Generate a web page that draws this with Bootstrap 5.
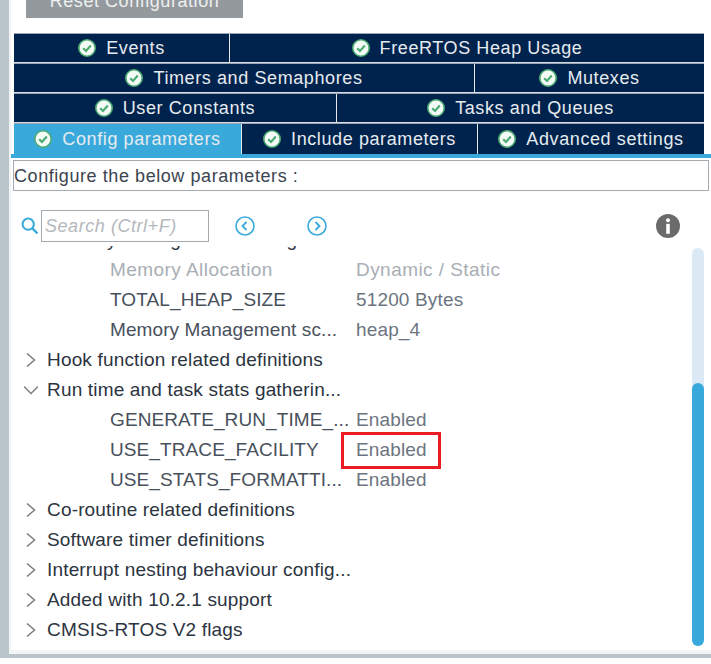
<!DOCTYPE html>
<html lang="en">
<head>
  <meta charset="UTF-8" />
  <title>FreeRTOS Config parameters</title>
  <link href="https://cdn.jsdelivr.net/npm/bootstrap@5.3.0/dist/css/bootstrap.min.css" rel="stylesheet">
  <style>
    body {
      background: #fff;
      font-family: "Liberation Sans", Arial, sans-serif;
      overflow: hidden;
    }
    .cfg-panel {
      height: 658px;
      border-left: 9px solid #b9c5cb;
      border-bottom: 4px solid #b9c5cb;
      background: #f1f3f4;
      padding: 0 0 4px 2px;
    }
    .cfg-inner { background: #fff; height: 100%; }
    .reset-btn {
      display: block;
      margin: -16px 0 15px 15px;
      width: 217px;
      height: 34px;
      background: #94999e;
      border: 0;
      color: #eef0f1;
      font-size: 18px;
      letter-spacing: .55px;
      line-height: 18px;
      padding: 0;
    }
    .tab-wrap { margin-left: 3px; width: 690px; }
    .tab-row { height: 30px; border-top: 1px solid #9aa6b4; border-bottom: 1px solid #d5dbe0; }
    .tab-row:last-child { height: 31px; border-bottom: 0; }
    .tab-item {
      background: #00234d;
      color: #e6ebef;
      font-size: 18px;
      letter-spacing: .6px;
      gap: 10px;
      white-space: nowrap;
      border-left: 1px solid #e5e9ec;
      min-width: 0;
    }
    .tab-item:first-child { border-left: 0; }
    .tab-item.is-active { background: #39a9dc; }
    .w-215 { width: 215px; } .w-475 { width: 475px; }
    .w-460 { width: 460px; } .w-230 { width: 230px; }
    .w-322 { width: 322px; } .w-368 { width: 368px; }
    .w-227 { width: 227px; } .w-236 { width: 236px; }
    .blue-bar { height: 4px; background: #39a9dc; }
    .intro-box {
      margin: 2px 2px 0 2px;
      height: 31px;
      border: 1px solid #a3aab0;
      font-size: 18px;
      line-height: 31px;
      letter-spacing: .57px;
      color: #3c4450;
    }
    .search-row { height: 55px; padding: 19px 0 0 10px; }
    .search-ico { width: 18px; height: 18px; margin-top: 7px; }
    .search-box {
      width: 168px;
      height: 32px;
      border: 1px solid #a3aab0;
      font-size: 18px;
      font-style: italic;
      color: #b4b8bc;
      line-height: 30px;
      padding-left: 3px;
      margin-left: 2px;
      letter-spacing: .55px;
    }
    .arrow-ico { width: 20px; height: 20px; margin-top: 6px; flex: none; }
    .arrow-prev { margin-left: 26px; }
    .arrow-next { margin-left: 52px; }
    .info-ico { width: 24px; height: 24px; margin: 4px 31px 0 auto; flex: none; }
    .tree-area { height: 404px; overflow: hidden; }
    .tree-list { margin-top: -21px; width: 680px; }
    .tree-row { height: 30px; line-height: 30px; font-size: 19px; letter-spacing: .17px; color: #2c3440; white-space: nowrap; }
    .tree-row svg { width: 14px; height: 14px; margin: 0 9px 0 13px; flex: none; }
    .tree-leaf { padding-left: 99px; color: #48505c; }
    .leaf-name { width: 246px; flex: none; letter-spacing: .1px; }
    .leaf-val { color: #6c7480; position: relative; letter-spacing: .15px; }
    .leaf-muted .leaf-name, .leaf-muted .leaf-val { color: #a9aeb4; letter-spacing: .45px; }
    .val-mark { position: absolute; left: -15px; top: -3px; width: 100px; height: 37px; border: 3px solid #ec1c24; }
    .tree-wrap { position: relative; }
    .scroll-track { position: absolute; left: 681px; top: 2px; width: 12px; height: 398px; background: #dbe9f5; border-radius: 6px; }
    .scroll-thumb { margin-top: 135px; height: 263px; background: #39a9dc; border-radius: 6px; }
  </style>
</head>
<body>
  <div class="cfg-panel">
    <div class="cfg-inner d-flex flex-column">
      <button class="reset-btn">Reset Configuration</button>

      <svg width="0" height="0" class="position-absolute">
        <symbol id="ok" viewBox="0 0 18 18">
          <circle cx="9" cy="9" r="8.2" fill="#f4fbf6" stroke="#4bab72" stroke-width="1.6"/>
          <path d="M5.2 9.2 8 12 12.8 6.6" fill="none" stroke="#4bab72" stroke-width="2.2"/>
        </symbol>
        <symbol id="right" viewBox="0 0 14 14">
          <path d="M3 0.5 10.5 7 3 13.5" fill="none" stroke="#7b7f84" stroke-width="1.5"/>
        </symbol>
        <symbol id="down" viewBox="0 0 14 14">
          <path d="M0 3.5 7 10.5 14 3.5" fill="none" stroke="#7b7f84" stroke-width="1.5"/>
        </symbol>
      </svg>

      <div class="tab-wrap">
        <div class="tab-row d-flex">
          <div class="tab-item w-215 d-flex align-items-center justify-content-center"><svg width="18" height="18"><use href="#ok"/></svg>Events</div>
          <div class="tab-item w-475 d-flex align-items-center justify-content-center"><svg width="18" height="18"><use href="#ok"/></svg>FreeRTOS Heap Usage</div>
        </div>
        <div class="tab-row d-flex">
          <div class="tab-item w-460 d-flex align-items-center justify-content-center"><svg width="18" height="18"><use href="#ok"/></svg>Timers and Semaphores</div>
          <div class="tab-item w-230 d-flex align-items-center justify-content-center"><svg width="18" height="18"><use href="#ok"/></svg>Mutexes</div>
        </div>
        <div class="tab-row d-flex">
          <div class="tab-item w-322 d-flex align-items-center justify-content-center"><svg width="18" height="18"><use href="#ok"/></svg>User Constants</div>
          <div class="tab-item w-368 d-flex align-items-center justify-content-center"><svg width="18" height="18"><use href="#ok"/></svg>Tasks and Queues</div>
        </div>
        <div class="tab-row d-flex">
          <div class="tab-item is-active w-227 d-flex align-items-center justify-content-center"><svg width="18" height="18"><use href="#ok"/></svg>Config parameters</div>
          <div class="tab-item w-236 d-flex align-items-center justify-content-center"><svg width="18" height="18"><use href="#ok"/></svg>Include parameters</div>
          <div class="tab-item w-227 d-flex align-items-center justify-content-center"><svg width="18" height="18"><use href="#ok"/></svg>Advanced settings</div>
        </div>
      </div>
      <div class="blue-bar"></div>

      <div class="intro-box">Configure the below parameters :</div>

      <div class="search-row d-flex">
        <svg class="search-ico" viewBox="0 0 18 18"><circle cx="7.2" cy="7.2" r="5.6" fill="none" stroke="#39a9dc" stroke-width="2"/><path d="M11.4 11.4 16.4 16.4" stroke="#39a9dc" stroke-width="2.2"/></svg>
        <div class="search-box">Search (Ctrl+F)</div>
        <svg class="arrow-ico arrow-prev" viewBox="0 0 20 20"><circle cx="10" cy="10" r="9" fill="none" stroke="#39a9dc" stroke-width="1.6"/><path d="M11.5 6 7.5 10 11.5 14" fill="none" stroke="#39a9dc" stroke-width="1.8"/></svg>
        <svg class="arrow-ico arrow-next" viewBox="0 0 20 20"><circle cx="10" cy="10" r="9" fill="none" stroke="#39a9dc" stroke-width="1.6"/><path d="M8.5 6 12.5 10 8.5 14" fill="none" stroke="#39a9dc" stroke-width="1.8"/></svg>
        <svg class="info-ico" viewBox="0 0 24 24"><circle cx="12" cy="12" r="12" fill="#6b6b6b"/><circle cx="12" cy="6.2" r="2" fill="#fff"/><rect x="10.2" y="9.8" width="3.6" height="10" fill="#fff"/></svg>
      </div>

      <div class="tree-wrap">
        <div class="tree-area">
          <div class="tree-list">
            <div class="tree-row d-flex align-items-center"><svg><use href="#down"/></svg>Memory management settings</div>
            <div class="tree-row tree-leaf leaf-muted d-flex"><span class="leaf-name">Memory Allocation</span><span class="leaf-val">Dynamic / Static</span></div>
            <div class="tree-row tree-leaf d-flex"><span class="leaf-name">TOTAL_HEAP_SIZE</span><span class="leaf-val">51200 Bytes</span></div>
            <div class="tree-row tree-leaf d-flex"><span class="leaf-name">Memory Management sc...</span><span class="leaf-val">heap_4</span></div>
            <div class="tree-row d-flex align-items-center"><svg><use href="#right"/></svg>Hook function related definitions</div>
            <div class="tree-row d-flex align-items-center"><svg><use href="#down"/></svg>Run time and task stats gatherin...</div>
            <div class="tree-row tree-leaf d-flex"><span class="leaf-name">GENERATE_RUN_TIME_...</span><span class="leaf-val">Enabled</span></div>
            <div class="tree-row tree-leaf d-flex"><span class="leaf-name">USE_TRACE_FACILITY</span><span class="leaf-val">Enabled<span class="val-mark"></span></span></div>
            <div class="tree-row tree-leaf d-flex"><span class="leaf-name">USE_STATS_FORMATTI...</span><span class="leaf-val">Enabled</span></div>
            <div class="tree-row d-flex align-items-center"><svg><use href="#right"/></svg>Co-routine related definitions</div>
            <div class="tree-row d-flex align-items-center"><svg><use href="#right"/></svg>Software timer definitions</div>
            <div class="tree-row d-flex align-items-center"><svg><use href="#right"/></svg>Interrupt nesting behaviour config...</div>
            <div class="tree-row d-flex align-items-center"><svg><use href="#right"/></svg>Added with 10.2.1 support</div>
            <div class="tree-row d-flex align-items-center"><svg><use href="#right"/></svg>CMSIS-RTOS V2 flags</div>
          </div>
        </div>
        <div class="scroll-track"><div class="scroll-thumb"></div></div>
      </div>
    </div>
  </div>
</body>
</html>
